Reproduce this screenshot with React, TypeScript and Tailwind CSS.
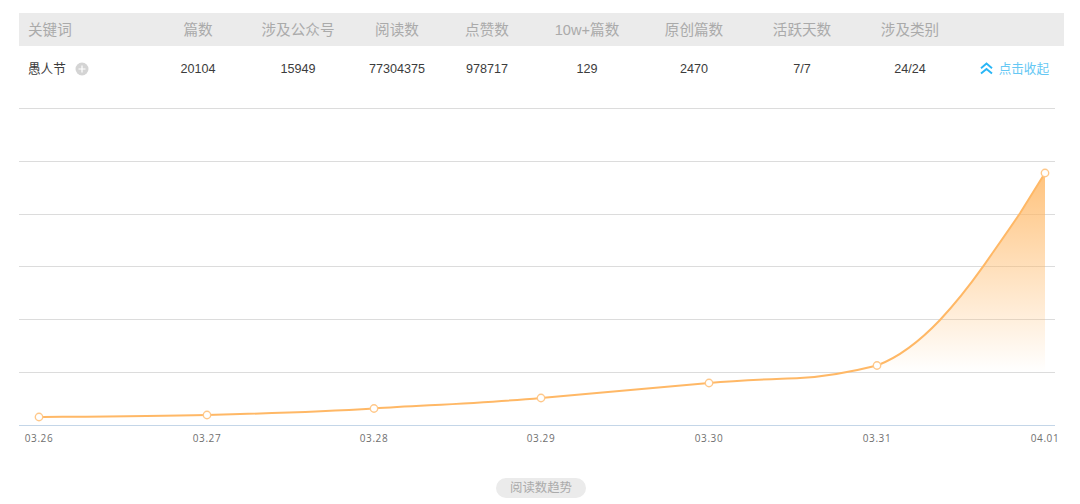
import React from 'react';

const columns = ['篇数', '涉及公众号', '阅读数', '点赞数', '10w+篇数', '原创篇数', '活跃天数', '涉及类别'];
const values = ['20104', '15949', '77304375', '978717', '129', '2470', '7/7', '24/24'];

const gridTemplate = 'grid grid-cols-[131px_96px_104px_94px_86px_114px_100px_116px_100px_104px]';

const gridLines = [0.5, 53.5, 106.5, 158.5, 211.5, 264.5];

const points = [
  { x: 39, y: 309, label: '03.26' },
  { x: 207, y: 307, label: '03.27' },
  { x: 374, y: 300.5, label: '03.28' },
  { x: 541, y: 290, label: '03.29' },
  { x: 709, y: 275, label: '03.30' },
  { x: 877, y: 257.5, label: '03.31' },
  { x: 1045, y: 65, label: '04.01' },
];

const curve =
  'M39 309 C95 308.6 150 308.4 207 307 C262 305.6 318 304 374 300.5 C430 297 486 295 541 290 C597 285 652 280 709 275 C745 271.5 780 271 800 270 C830 268.5 855 263 877 257.5 C897 250 920 233 940 212 C955 196 970 177 983 158.7 C996 140 1008 123 1020 105.3 C1029 91 1037 78 1045 65';

const App: React.FC = () => {
  return (
    <div className="w-[1080px] h-[504px] bg-white overflow-hidden pt-[13px] font-['Liberation_Sans','Noto_Sans_CJK_SC',sans-serif]">
      {/* Table header */}
      <div className={`${gridTemplate} ml-[19px] w-[1045px] h-[33px] pt-[2px] items-center bg-[#ebebeb] text-[14.6px] text-[#aaaaaa]`}>
        <div className="pl-[9px]">关键词</div>
        {columns.map((col) => (
          <div key={col} className="text-center">{col}</div>
        ))}
        <div />
      </div>

      {/* Keyword row */}
      <div className={`${gridTemplate} ml-[19px] w-[1045px] h-[45px] pt-[1px] items-center text-[12.6px] text-[#3c3c3c]`}>
        <div className="pl-[9px] flex items-center gap-[9px]">
          <span>愚人节</span>
          <svg width="14" height="14" viewBox="0 0 14 14">
            <circle cx="7" cy="7" r="6.5" fill="#d4d4d4" />
            <path d="M7 3.5v7M3.5 7h7" stroke="#ffffff" strokeWidth="1.2" />
          </svg>
        </div>
        {values.map((value) => (
          <div key={value} className="text-center">{value}</div>
        ))}
        <div className="flex items-center justify-end gap-[6px] pr-[15px] text-[#66c8f4]">
          <svg width="13" height="13" viewBox="0 0 13 13" fill="none" stroke="#29b6f6" strokeWidth="1.9">
            <path d="M1 6.2 6.5 1.6 12 6.2M1 11.6 6.5 7 12 11.6" />
          </svg>
          <span>点击收起</span>
        </div>
      </div>

      {/* Trend chart */}
      <svg width="1080" height="350" viewBox="0 0 1080 350" className="block mt-[17px]">
        <defs>
          <linearGradient id="areaFill" gradientUnits="userSpaceOnUse" x1="0" y1="65" x2="0" y2="264">
            <stop offset="0" stopColor="#ffb866" stopOpacity="0.85" />
            <stop offset="1" stopColor="#ffb866" stopOpacity="0" />
          </linearGradient>
        </defs>
        {gridLines.map((y) => (
          <line key={y} x1="19" x2="1055" y1={y} y2={y} stroke="#dcdcdc" />
        ))}
        <line x1="19" x2="1055" y1="317.5" y2="317.5" stroke="#c4d6e8" />
        <path d={`${curve} L1045 317 L39 317 Z`} fill="url(#areaFill)" />
        <path d={curve} fill="none" stroke="#ffb866" strokeWidth="2" />
        {points.map((p) => (
          <g key={p.label}>
            <circle cx={p.x} cy={p.y} r="3.7" fill="#ffffff" stroke="#ffc88a" strokeWidth="1.4" />
            <text
              x={p.x}
              y="334"
              textAnchor="middle"
              fontSize="10"
              letterSpacing="0.6"
              fill="#6f6f6f"
              fontFamily="'Open Sans', sans-serif"
            >
              {p.label}
            </text>
          </g>
        ))}
      </svg>

      {/* Chart caption */}
      <div className="flex justify-center pl-[2px] mt-[20px]">
        <span className="flex h-5 w-[90px] items-center justify-center rounded-full bg-[#ebebeb] text-[12.4px] text-[#aaaaaa]">
          阅读数趋势
        </span>
      </div>
    </div>
  );
};

export default App;
